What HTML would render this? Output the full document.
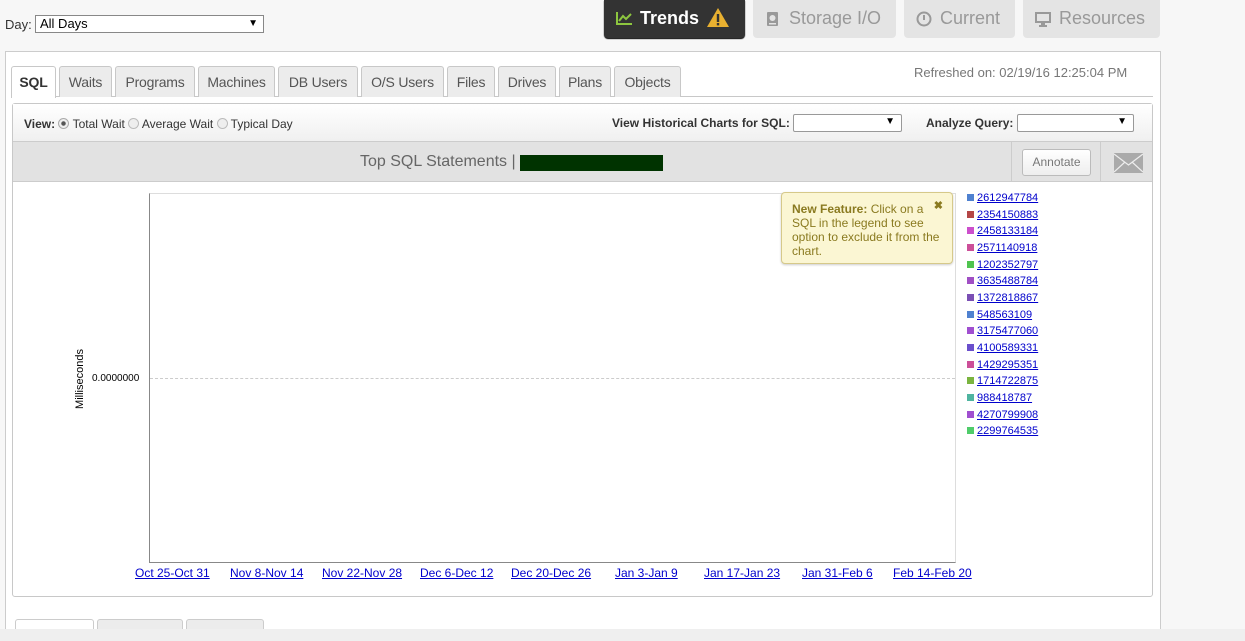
<!DOCTYPE html>
<html style="overflow:hidden;height:641px"><head><style>
*{box-sizing:border-box}
body{margin:0;width:1245px;height:641px;background:#f7f7f7;font-family:"Liberation Sans",sans-serif;position:relative;overflow:hidden}
.a{position:absolute}
.btn{position:absolute;top:0;height:38px;border-radius:0 0 4px 4px;background:#e4e4e4;color:#999;font-size:18px;line-height:37px;padding-left:12px}
.tab{position:absolute;top:66px;height:31px;border:1px solid #c8c8c8;border-bottom:none;border-radius:3px 3px 0 0;background:#ececec;color:#555;font-size:14px;letter-spacing:-0.2px;text-align:center;line-height:30px}
.lg{position:absolute;left:967px;font-size:11px;color:#00c;text-decoration:underline;line-height:13px}
.lg i{display:inline-block;width:7px;height:7px;margin-right:3px;vertical-align:0}
.x{position:absolute;top:566px;font-size:12px;color:#00c;text-decoration:underline}
</style></head><body>
<div class="a" style="left:5px;top:17px;font-size:13px;color:#333">Day:</div>
<div class="a" style="left:35px;top:15px;width:229px;height:18px;border:1px solid #888;background:#fff;font-size:13px;line-height:16px;padding-left:4px">All Days<span style="position:absolute;right:5px;font-size:10px">▼</span></div>

<div class="btn" style="left:604px;width:141px;background:#333;color:#fff;font-weight:bold;box-shadow:0 1px 1px #000">
<svg class="a" style="left:12px;top:11px" width="17" height="14"><path d="M1 1V13H16" stroke="#8dc63f" stroke-width="2" fill="none"/><path d="M3 10L7 5L10 8L15 3" stroke="#8dc63f" stroke-width="2" fill="none"/></svg>
<span style="margin-left:24px">Trends</span>
<svg class="a" style="left:102px;top:7px" width="24" height="21"><path d="M12 1L23 20H1Z" fill="#e8b030"/><rect x="10.8" y="7" width="2.4" height="8" fill="#333"/><rect x="10.8" y="16" width="2.4" height="2.4" fill="#333"/></svg>
</div>
<div class="btn" style="left:753px;width:143px"><svg class="a" style="left:14px;top:12px" width="11" height="14"><rect x="0" y="0" width="11" height="14" rx="1" fill="#999"/><circle cx="5.5" cy="6" r="3" fill="#e4e4e4"/><rect x="2" y="11" width="7" height="1.5" fill="#e4e4e4"/></svg><span style="margin-left:24px">Storage I/O</span></div>
<div class="btn" style="left:904px;width:111px"><svg class="a" style="left:12px;top:11px" width="16" height="16"><circle cx="8" cy="8" r="6.5" stroke="#999" stroke-width="2" fill="none"/><rect x="7" y="4" width="2" height="5" fill="#999"/></svg><span style="margin-left:24px">Current</span></div>
<div class="btn" style="left:1023px;width:137px"><svg class="a" style="left:12px;top:12px" width="16" height="15"><rect x="1" y="1" width="14" height="9" stroke="#999" stroke-width="2" fill="none"/><rect x="6" y="10" width="4" height="3" fill="#999"/><rect x="4" y="13" width="8" height="2" fill="#999"/></svg><span style="margin-left:24px">Resources</span></div>

<div class="a" style="left:5px;top:51px;width:1156px;height:590px;background:#fff;border:1px solid #ccc;border-bottom:none"></div>
<div class="a" style="left:914px;top:65px;font-size:13px;color:#777">Refreshed on: 02/19/16 12:25:04 PM</div>
<div class="a" style="left:11px;top:96px;width:1142px;border-top:1px solid #c8c8c8"></div>
<div class="tab" style="left:11px;width:45px;background:#fff;color:#333;font-weight:bold;height:32px">SQL</div>
<div class="tab" style="left:59px;width:53px">Waits</div>
<div class="tab" style="left:115px;width:80px">Programs</div>
<div class="tab" style="left:198px;width:77px">Machines</div>
<div class="tab" style="left:278px;width:80px">DB Users</div>
<div class="tab" style="left:361px;width:83px">O/S Users</div>
<div class="tab" style="left:447px;width:48px">Files</div>
<div class="tab" style="left:498px;width:58px">Drives</div>
<div class="tab" style="left:559px;width:52px">Plans</div>
<div class="tab" style="left:614px;width:67px">Objects</div>

<div class="a" style="left:12px;top:103px;width:1141px;height:494px;border:1px solid #c8c8c8;border-radius:3px;background:#fff"></div>
<div class="a" style="left:13px;top:104px;width:1139px;height:38px;background:linear-gradient(#fff,#f0f0f0);border-bottom:1px solid #ccc"></div>
<div class="a" style="left:24px;top:117px;font-size:12px;color:#333"><b>View:</b> <span style="display:inline-block;width:11px;height:11px;border:1px solid #aaa;border-radius:50%;vertical-align:-1px;background:radial-gradient(#555 30%,#eee 40%)"></span> Total Wait <span style="display:inline-block;width:11px;height:11px;border:1px solid #bbb;border-radius:50%;vertical-align:-1px;background:#eee"></span> Average Wait <span style="display:inline-block;width:11px;height:11px;border:1px solid #bbb;border-radius:50%;vertical-align:-1px;background:#eee"></span> Typical Day</div>
<div class="a" style="left:612px;top:116px;font-size:12px;font-weight:bold;color:#333">View Historical Charts for SQL:</div>
<div class="a" style="left:793px;top:114px;width:109px;height:18px;border:1px solid #999;background:#fff;border-radius:2px"><span style="position:absolute;right:6px;top:1px;font-size:10px">▼</span></div>
<div class="a" style="left:926px;top:116px;font-size:12px;font-weight:bold;color:#333">Analyze Query:</div>
<div class="a" style="left:1017px;top:114px;width:117px;height:18px;border:1px solid #999;background:#fff;border-radius:2px"><span style="position:absolute;right:6px;top:1px;font-size:10px">▼</span></div>

<div class="a" style="left:13px;top:142px;width:1139px;height:40px;background:#e2e2e2;border-bottom:1px solid #ccc"></div>
<div class="a" style="left:360px;top:153px;font-size:16px;color:#666">Top SQL Statements |</div>
<div class="a" style="left:520px;top:155px;width:143px;height:16px;background:#003300"></div>
<div class="a" style="left:1011px;top:142px;width:90px;height:40px;border-left:1px solid #ccc;border-right:1px solid #ccc"></div>
<div class="a" style="left:1022px;top:149px;width:69px;height:27px;border:1px solid #bbb;border-radius:3px;background:linear-gradient(#fff,#eee);font-size:12px;color:#777;text-align:center;line-height:25px">Annotate</div>
<svg class="a" style="left:1114px;top:153px" width="29" height="20"><rect width="29" height="20" fill="#aaa"/><path d="M0 1L14.5 12L29 1M0 19L11 9M29 19L18 9" stroke="#eee" stroke-width="1.2" fill="none"/></svg>

<div class="a" style="left:149px;top:193px;width:807px;height:370px;border:1px solid #888;border-top-color:#ddd;border-right-color:#ddd"></div>
<div class="a" style="left:150px;top:378px;width:805px;border-top:1px dashed #ccc"></div>
<div class="a" style="left:92px;top:373px;font-size:10px;color:#000">0.0000000</div>
<div class="a" style="left:50px;top:373px;font-size:11px;transform:rotate(-90deg);width:60px;text-align:center">Milliseconds</div>
<div class="x" style="left:135px">Oct 25-Oct 31</div>
<div class="x" style="left:230px">Nov 8-Nov 14</div>
<div class="x" style="left:322px">Nov 22-Nov 28</div>
<div class="x" style="left:420px">Dec 6-Dec 12</div>
<div class="x" style="left:511px">Dec 20-Dec 26</div>
<div class="x" style="left:615px">Jan 3-Jan 9</div>
<div class="x" style="left:704px">Jan 17-Jan 23</div>
<div class="x" style="left:802px">Jan 31-Feb 6</div>
<div class="x" style="left:893px">Feb 14-Feb 20</div>

<div class="lg" style="top:192px"><i style="background:#4f81d0"></i>2612947784</div>
<div class="lg" style="top:209px"><i style="background:#b44646"></i>2354150883</div>
<div class="lg" style="top:225px"><i style="background:#cc4fcc"></i>2458133184</div>
<div class="lg" style="top:242px"><i style="background:#cc4f99"></i>2571140918</div>
<div class="lg" style="top:259px"><i style="background:#4fc44f"></i>1202352797</div>
<div class="lg" style="top:275px"><i style="background:#a04fc4"></i>3635488784</div>
<div class="lg" style="top:292px"><i style="background:#7a4fb4"></i>1372818867</div>
<div class="lg" style="top:309px"><i style="background:#4f81d0"></i>548563109</div>
<div class="lg" style="top:325px"><i style="background:#a04fd0"></i>3175477060</div>
<div class="lg" style="top:342px"><i style="background:#6a4fcc"></i>4100589331</div>
<div class="lg" style="top:359px"><i style="background:#cc4f99"></i>1429295351</div>
<div class="lg" style="top:375px"><i style="background:#7ab43f"></i>1714722875</div>
<div class="lg" style="top:392px"><i style="background:#4fb4a0"></i>988418787</div>
<div class="lg" style="top:409px"><i style="background:#a04fd0"></i>4270799908</div>
<div class="lg" style="top:425px"><i style="background:#4fcc6a"></i>2299764535</div>

<div class="a" style="left:781px;top:192px;width:172px;height:72px;background:#fbf6d3;border:1px solid #d6c98a;border-radius:4px;box-shadow:0 1px 2px #ccc;font-size:12px;color:#8a7a20;padding:9px 10px;line-height:14px"><b>New Feature:</b> Click on a SQL in the legend to see option to exclude it from the chart.<span style="position:absolute;right:9px;top:6px;font-weight:bold;font-size:11px">✖</span></div>

<div class="a" style="left:15px;top:619px;width:79px;height:20px;border:1px solid #ccc;border-radius:3px 3px 0 0;background:#fff"></div>
<div class="a" style="left:97px;top:619px;width:86px;height:20px;border:1px solid #ccc;border-radius:3px 3px 0 0;background:#ececec"></div>
<div class="a" style="left:186px;top:619px;width:78px;height:20px;border:1px solid #ccc;border-radius:3px 3px 0 0;background:#ececec"></div>
<div class="a" style="left:0;top:629px;width:1245px;height:12px;background:#efefef"></div>
</body></html>
